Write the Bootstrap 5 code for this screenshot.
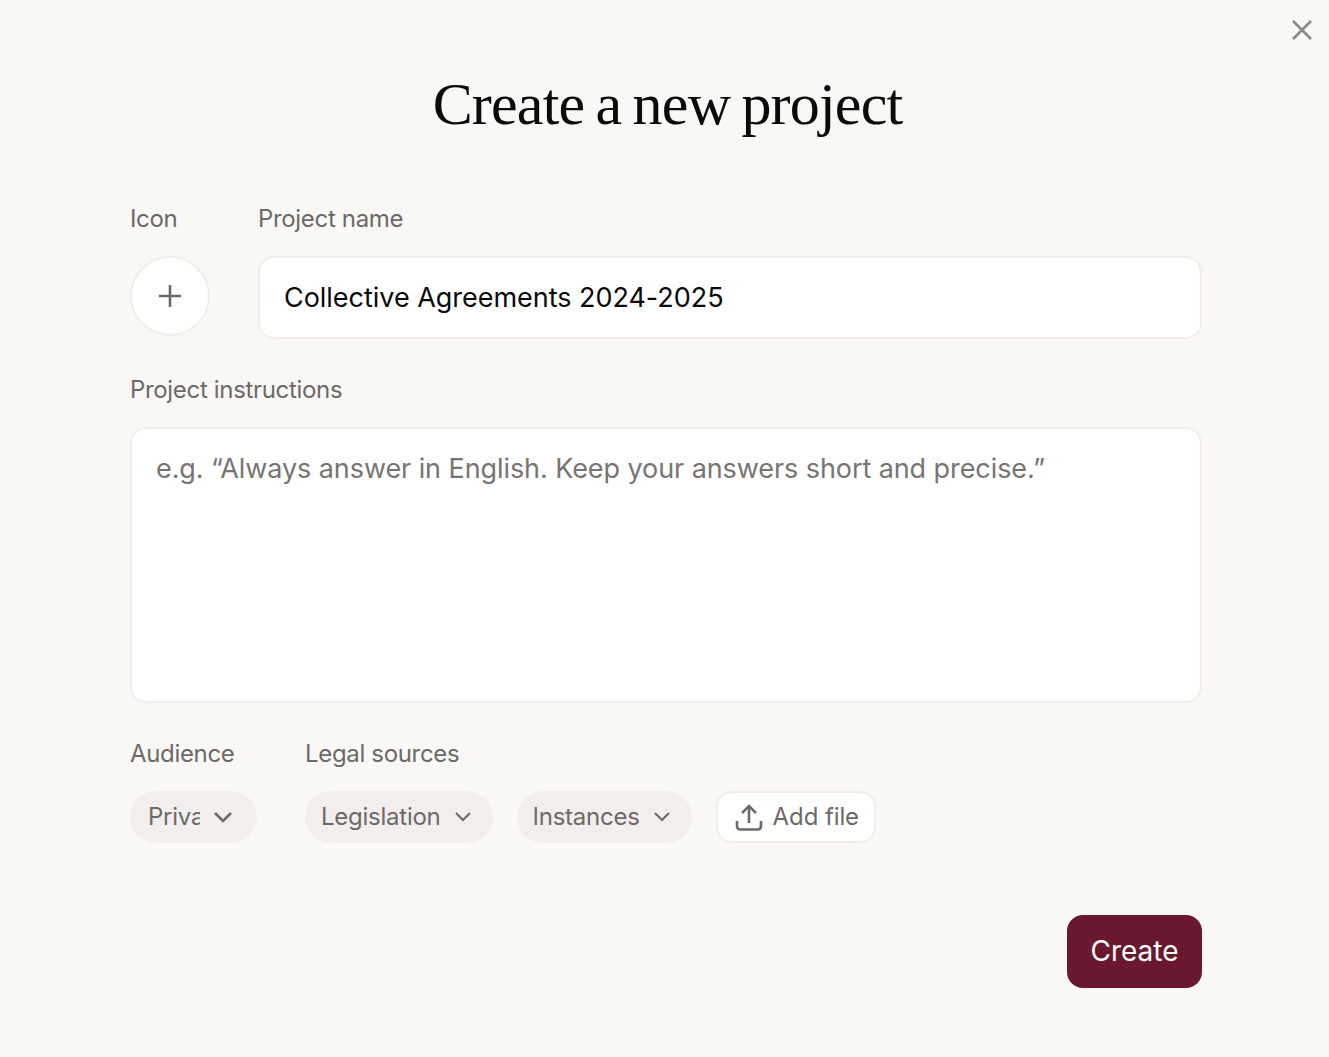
<!DOCTYPE html>
<html lang="en">
<head>
  <meta charset="UTF-8" />
  <title>Create a new project</title>
  <link href="https://cdn.jsdelivr.net/npm/bootstrap@5.3.3/dist/css/bootstrap.min.css" rel="stylesheet" />
  <style>
    body { background: #faf8f5; font-family: Inter, "Liberation Sans", sans-serif; color: #6c6a67; height: 1057px; overflow: hidden; }
    .close-x { top: 19px; right: 16px; color: #8a8986; }
    .dialog { width: 1072px; margin-left: 130px; padding-top: 68px; }
    .dialog-title { font-family: "Liberation Serif", serif; font-size: 60px; line-height: 72px; font-weight: 400; letter-spacing: -.8px; word-spacing: -3px; color: #0b0b0b; text-align: center; margin: 0 0 61px 3px; }
    .field-label { font-size: 24px; line-height: 36px; color: #6c6a67; margin-bottom: 19px; letter-spacing: -.33px; }
    .icon-col { width: 128px; }
    .icon-pick { width: 80px; height: 80px; border: 2px solid #f1eeea; background: #fff; }
    .name-input, .name-input:focus { height: 83px; font-size: 27px; letter-spacing: -.03px; color: #0b0b0b; padding: 0 24px; border: 2px solid #f1eeea; border-radius: 16px; box-shadow: none; }
    .instr-label { margin-top: 33px; }
    .instructions, .instructions:focus { height: 276px; resize: none; font-size: 27px; letter-spacing: -.08px; line-height: 40px; padding: 20px 24px; border: 2px solid #f1eeea; border-radius: 16px; box-shadow: none; }
    .instructions::placeholder { color: #777572; opacity: 1; }
    .pick-row { margin-top: 33px; }
    .aud-col { width: 175px; }
    .pick-pill { height: 52px; background: #f2eeeb; color: #6c6a67; font-size: 24px; letter-spacing: -.25px; border: 0; border-radius: 26px; padding: 0 22px 0 16px; gap: 14px; }
    .pill-wide { padding: 0 24px 0 18px; gap: 13px; }
    .clip-text { display: block; width: 52px; overflow: hidden; white-space: nowrap; }
    .add-file { height: 52px; background: #fff; color: #6c6a67; font-size: 24px; letter-spacing: -.1px; border: 2px solid #f1eeea; border-radius: 16px; padding: 0 15px 0 17px; gap: 10px; }
    .create-row { margin-top: 72px; }
    .create-btn { width: 135px; height: 73px; background: #6a182e; color: #fff; font-size: 28px; border: 0; border-radius: 16px; padding-bottom: 8px; }
    .create-btn:hover { background: #6a182e; color: #fff; }
  </style>
</head>
<body>

  <button type="button" class="close-x btn p-0 border-0 position-absolute d-flex" aria-label="Close">
    <svg width="22" height="22" viewBox="0 0 22 22" fill="none" stroke="currentColor" stroke-width="2.6"><path d="M2 2 20 20M20 2 2 20"/></svg>
  </button>

  <div class="dialog">
    <h1 class="dialog-title">Create a new project</h1>

    <div class="d-flex">
      <div class="icon-col">
        <div class="field-label">Icon</div>
        <button type="button" class="icon-pick btn p-0 rounded-circle d-flex align-items-center justify-content-center" aria-label="Choose icon">
          <svg width="24" height="24" viewBox="0 0 24 24" fill="none" stroke="#6c6a67" stroke-width="2.6"><path d="M12 1V23M1 12H23"/></svg>
        </button>
      </div>
      <div class="flex-grow-1">
        <div class="field-label">Project name</div>
        <input class="form-control name-input" type="text" value="Collective Agreements 2024-2025" />
      </div>
    </div>

    <div class="field-label instr-label">Project instructions</div>
    <textarea class="form-control instructions" placeholder="e.g. “Always answer in English. Keep your answers short and precise.”"></textarea>

    <div class="d-flex pick-row">
      <div class="aud-col">
        <div class="field-label">Audience</div>
        <button type="button" class="pick-pill pill-wide btn d-flex align-items-center">
          <span class="clip-text">Private</span>
          <svg width="20" height="12" viewBox="0 0 20 12" fill="none" stroke="currentColor" stroke-width="2.6"><path d="M2 2 10 10 18 2"/></svg>
        </button>
      </div>
      <div>
        <div class="field-label">Legal sources</div>
        <div class="d-flex gap-4">
          <button type="button" class="pick-pill btn d-flex align-items-center">
            Legislation
            <svg width="16" height="10" viewBox="0 0 16 10" fill="none" stroke="currentColor" stroke-width="2"><path d="M1 1 8 8 15 1"/></svg>
          </button>
          <button type="button" class="pick-pill btn d-flex align-items-center">
            Instances
            <svg width="16" height="10" viewBox="0 0 16 10" fill="none" stroke="currentColor" stroke-width="2"><path d="M1 1 8 8 15 1"/></svg>
          </button>
          <button type="button" class="add-file btn d-flex align-items-center">
            <svg width="28" height="27" viewBox="0 0 28 27" fill="none" stroke="currentColor" stroke-width="2.6"><path d="M14 19V2M7 9 14 2 21 9M2 17V22Q2 25.500 5.500 25.500H22.500Q26 25.500 26 22V17"/></svg>
            Add file
          </button>
        </div>
      </div>
    </div>

    <div class="d-flex justify-content-end create-row">
      <button type="button" class="create-btn btn">Create</button>
    </div>
  </div>

</body>
</html>
